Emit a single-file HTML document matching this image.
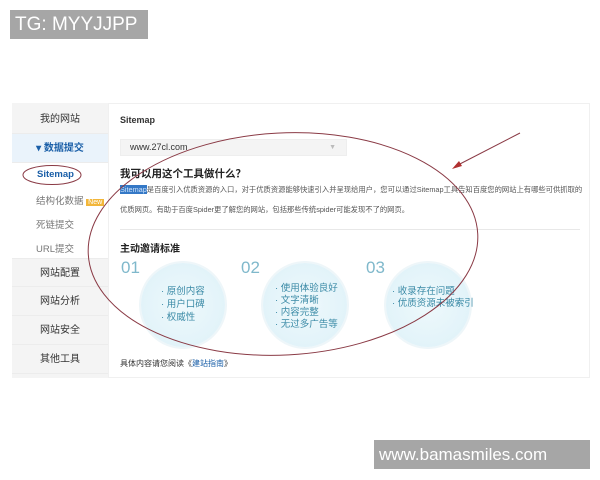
<!DOCTYPE html>
<html><head><meta charset="utf-8"><style>
*{margin:0;padding:0;box-sizing:border-box}
body{width:600px;height:480px;background:#fff;position:relative;overflow:hidden;font-family:"Liberation Sans","Noto Sans CJK SC",sans-serif}
.a{position:absolute;white-space:nowrap}
.tag{background:#a6a6a6;color:#fff;font-size:19px;line-height:29px;padding-left:5px}
.side{left:12px;top:103px;width:96px;height:275px;background:#f4f4f4}
.si{position:absolute;left:0;width:96px;font-size:10px;color:#333;text-align:center;height:29px;line-height:29px;border-bottom:1px solid #ececec}
.sub{position:absolute;left:0;width:96px;background:#fff;font-size:9.5px;color:#777}
.c{position:absolute;width:84px;height:84px;border-radius:50%;background:radial-gradient(circle,#eef9fc 0%,#e2f3f9 70%,#d8eef6 100%);box-shadow:0 0 0 2px #eef6f9}
.ct{position:absolute;font-size:9.5px;color:#3a8aa6;line-height:13px;white-space:nowrap}
.num{font-size:17px;color:#7fb8cb;font-weight:300}
</style></head><body>
<div class="a tag" style="left:10px;top:10px;width:138px;height:29px">TG: MYYJJPP</div>
<div class="a tag" style="left:374px;top:440px;width:216px;height:29px;font-size:17px">www.bamasmiles.com</div>

<div class="a" style="left:108px;top:103px;width:482px;height:275px;background:#fff;border:1px solid #f0f0f0"></div>
<div class="a side">
 <div class="si" style="top:2px">我的网站</div>
 <div class="si" style="top:31px;background:#eaf3fb;color:#1a5fa8;font-weight:bold">▾ 数据提交</div>
 <div class="sub" style="top:60px;height:95px">
  <div class="a" style="left:25px;top:6px;color:#1a5fa8;font-weight:bold">Sitemap</div>
  <div class="a" style="left:24px;top:30px">结构化数据 <span style="background:#f2b63a;color:#fff;font-size:7px;padding:0 2px">New</span></div>
  <div class="a" style="left:24px;top:54px">死链提交</div>
  <div class="a" style="left:24px;top:78px">URL提交</div>
 </div>
 <div class="si" style="top:155px;border-top:1px solid #ececec">网站配置</div>
 <div class="si" style="top:184px">网站分析</div>
 <div class="si" style="top:213px">网站安全</div>
 <div class="si" style="top:242px">其他工具</div>
</div>

<div class="a" style="left:120px;top:115px;font-size:9px;font-weight:bold;color:#333">Sitemap</div>
<div class="a" style="left:120px;top:139px;width:227px;height:17px;background:#f4f4f4;border:1px solid #eee;font-size:9px;color:#333;line-height:15px;padding-left:9px">www.27cl.com<span style="position:absolute;right:10px;color:#bbb;font-size:7px">▼</span></div>
<div class="a" style="left:120px;top:166px;font-size:10.5px;font-weight:bold;color:#222">我可以用这个工具做什么？</div>
<div class="a" style="left:120px;top:185px;font-size:7.3px;color:#555"><span style="background:#3478c6;color:#cfe3fa">Sitemap</span>是百度引入优质资源的入口，对于优质资源能够快速引入并呈现给用户，您可以通过Sitemap工具告知百度您的网站上有哪些可供抓取的</div>
<div class="a" style="left:120px;top:205px;font-size:7.3px;color:#555">优质网页。有助于百度Spider更了解您的网站，包括那些传统spider可能发现不了的网页。</div>
<div class="a" style="left:120px;top:229px;width:460px;height:1px;background:#e8e8e8"></div>
<div class="a" style="left:120px;top:240px;font-size:10px;font-weight:bold;color:#222">主动邀请标准</div>

<div class="a num" style="left:121px;top:258px">01</div>
<div class="a num" style="left:241px;top:258px">02</div>
<div class="a num" style="left:366px;top:258px">03</div>
<div class="c" style="left:141px;top:263px"></div>
<div class="c" style="left:263px;top:263px"></div>
<div class="c" style="left:386px;top:263px"></div>
<div class="ct" style="left:161px;top:285px">· 原创内容<br>· 用户口碑<br>· 权威性</div>
<div class="ct" style="left:275px;top:283px;line-height:12px">· 使用体验良好<br>· 文字清晰<br>· 内容完整<br>· 无过多广告等</div>
<div class="ct" style="left:392px;top:286px;line-height:12px">· 收录存在问题<br>· 优质资源未被索引</div>
<div class="a" style="left:120px;top:358px;font-size:8px;color:#333">具体内容请您阅读《<span style="color:#1a5fa8">建站指南</span>》</div>

<svg class="a" style="left:0;top:0" width="600" height="480">
 <ellipse cx="283" cy="244" rx="195" ry="111" transform="rotate(-3 283 244)" fill="none" stroke="#8a3a45" stroke-width="1"/>
 <ellipse cx="52" cy="175" rx="29" ry="9.5" fill="none" stroke="#8a3a45" stroke-width="1"/>
 <line x1="520" y1="133" x2="456" y2="166" stroke="#8a3a45" stroke-width="1"/>
 <polygon points="452,169 459,161 462,166" fill="#b03030"/>
</svg>
</body></html>
